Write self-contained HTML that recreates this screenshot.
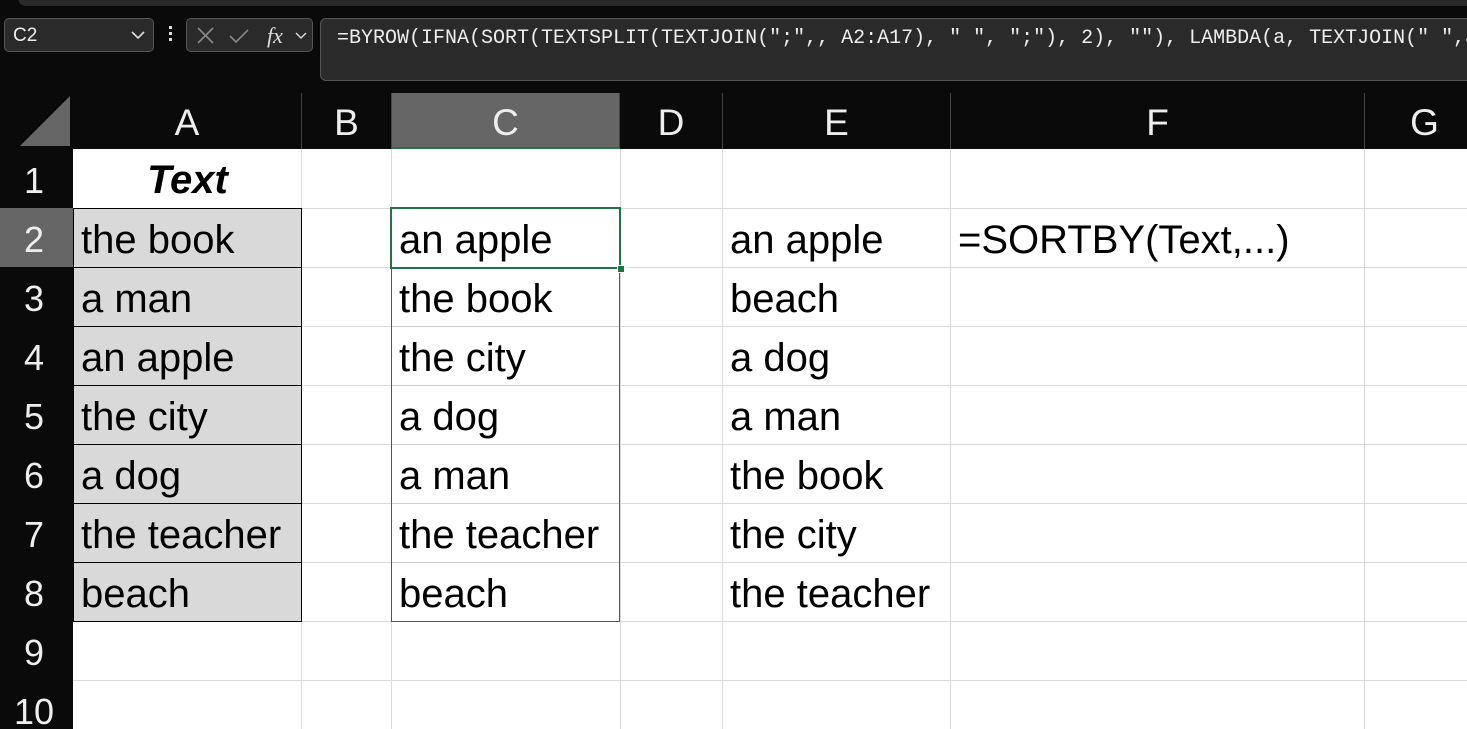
<!DOCTYPE html>
<html style="overflow:hidden"><head><style>
html,body{margin:0;width:1467px;height:729px;overflow:hidden}
body{background:#0a0a0a;position:relative;font-family:"Liberation Sans",sans-serif}
.a{position:absolute}
.top{left:18px;top:-10px;width:1460px;height:16px;background:#2b2b2b;border-radius:8px}
.nb{left:4px;top:18px;width:150px;height:34px;border:1px solid #555;border-radius:5px;background:#2a2a2a;color:#eee;font-size:19px;line-height:34px;box-sizing:border-box;padding-left:8px}
.fxb{left:186px;top:18px;width:127px;height:34px;border:1px solid #555;border-radius:5px;background:#2a2a2a;box-sizing:border-box}
.fb{left:320px;top:18px;width:1160px;height:63px;border:1px solid #555;border-radius:6px;background:#2a2a2a;box-sizing:border-box;color:#eee;font-family:"Liberation Mono",monospace;font-size:20px;padding:8px 0 0 16px;white-space:nowrap}
.ch{top:93px;height:56px;color:#eee;font-size:37px;text-align:center;line-height:60px;border-right:1px solid #444;box-sizing:border-box}
.rh{left:0;width:68px;height:59px;color:#eee;font-size:36px;text-align:center;line-height:64px;box-sizing:border-box}
.grid{left:73px;top:149px;width:1394px;height:580px;background:#fff}
.vl{top:149px;width:1px;height:580px;background:#dadada}
.hl{left:73px;width:1394px;height:1px;background:#dadada}
.c{position:absolute;font-size:40px;color:#000;line-height:59px;padding-left:8px;box-sizing:border-box;height:59px;white-space:nowrap}
</style></head><body>
<div class="a top"></div>
<div class="a nb">C2<svg class="a" style="left:126px;top:11px" width="14" height="10"><path d="M1 2l6 6 6-6" stroke="#ddd" stroke-width="1.6" fill="none"/></svg></div>
<div class="a" style="left:169px;top:26px;width:3px;height:3px;background:#ddd;box-shadow:0 6px #ddd,0 12px #ddd"></div>
<div class="a fxb"><svg width="127" height="34"><path d="M11 9l15 15M26 9L11 24" stroke="#888" stroke-width="1.6"/><path d="M43 17l6 6 12-12" stroke="#888" stroke-width="1.6" fill="none"/><text x="80" y="24" fill="#ddd" font-family="Liberation Serif" font-style="italic" font-size="22">fx</text><path d="M109 14l5 5 5-5" stroke="#ddd" stroke-width="1.4" fill="none"/></svg></div>
<div class="a fb">=BYROW(IFNA(SORT(TEXTSPLIT(TEXTJOIN(";",, A2:A17), " ", ";"), 2), ""), LAMBDA(a, TEXTJOIN(" ",a))</div>
<svg class="a" style="left:0;top:93px" width="73" height="56"><path d="M70 3V53H20Z" fill="#666"/></svg>
<div class="a ch" style="left:73px;width:229px">A</div>
<div class="a ch" style="left:302px;width:90px">B</div>
<div class="a ch" style="left:392px;width:228px;background:#666;border-bottom:2px solid #217346">C</div>
<div class="a ch" style="left:620px;width:103px">D</div>
<div class="a ch" style="left:723px;width:228px">E</div>
<div class="a ch" style="left:951px;width:414px">F</div>
<div class="a ch" style="left:1365px;width:120px">G</div>
<div class="a" style="left:0;top:208px;width:73px;height:59px;background:#666"></div>
<div class="a rh" style="top:149px">1</div>
<div class="a rh" style="top:208px">2</div>
<div class="a rh" style="top:267px">3</div>
<div class="a rh" style="top:326px">4</div>
<div class="a rh" style="top:385px">5</div>
<div class="a rh" style="top:444px">6</div>
<div class="a rh" style="top:503px">7</div>
<div class="a rh" style="top:562px">8</div>
<div class="a rh" style="top:621px">9</div>
<div class="a rh" style="top:680px">10</div>
<div class="a grid"></div>
<div class="a vl" style="left:301px"></div><div class="a vl" style="left:391px"></div><div class="a vl" style="left:620px"></div><div class="a vl" style="left:722px"></div><div class="a vl" style="left:950px"></div><div class="a vl" style="left:1364px"></div>
<div class="a hl" style="top:208px"></div><div class="a hl" style="top:267px"></div><div class="a hl" style="top:326px"></div><div class="a hl" style="top:385px"></div><div class="a hl" style="top:444px"></div><div class="a hl" style="top:503px"></div><div class="a hl" style="top:562px"></div><div class="a hl" style="top:621px"></div><div class="a hl" style="top:680px"></div>
<div class="a" style="left:73px;top:208px;width:229px;height:414px;background:#d9d9d9;border:1px solid #000;box-sizing:border-box;background-image:repeating-linear-gradient(to bottom,transparent 0 58px,#000 58px 59px)"></div>
<div class="a" style="left:391px;top:208px;width:229px;height:414px;background:#fff;border:1px solid #555;box-sizing:border-box;background-image:repeating-linear-gradient(to bottom,transparent 0 58px,#d0d0d0 58px 59px)"></div>
<div class="a" style="left:390px;top:207px;width:231px;height:62px;border:2px solid #217346;box-sizing:border-box"></div>
<div class="a" style="left:617px;top:265px;width:6px;height:6px;background:#217346;border:1px solid #fff"></div>
<div class="c" style="left:73px;top:151px;width:229px;text-align:center;font-weight:bold;font-style:italic;padding:0">Text</div>
<div class="c" style="left:73px;top:211px">the book</div>
<div class="c" style="left:73px;top:270px">a man</div>
<div class="c" style="left:73px;top:329px">an apple</div>
<div class="c" style="left:73px;top:388px">the city</div>
<div class="c" style="left:73px;top:447px">a dog</div>
<div class="c" style="left:73px;top:506px">the teacher</div>
<div class="c" style="left:73px;top:565px">beach</div>
<div class="c" style="left:391px;top:211px">an apple</div>
<div class="c" style="left:391px;top:270px">the book</div>
<div class="c" style="left:391px;top:329px">the city</div>
<div class="c" style="left:391px;top:388px">a dog</div>
<div class="c" style="left:391px;top:447px">a man</div>
<div class="c" style="left:391px;top:506px">the teacher</div>
<div class="c" style="left:391px;top:565px">beach</div>
<div class="c" style="left:722px;top:211px">an apple</div>
<div class="c" style="left:722px;top:270px">beach</div>
<div class="c" style="left:722px;top:329px">a dog</div>
<div class="c" style="left:722px;top:388px">a man</div>
<div class="c" style="left:722px;top:447px">the book</div>
<div class="c" style="left:722px;top:506px">the city</div>
<div class="c" style="left:722px;top:565px">the teacher</div>
<div class="c" style="left:950px;top:211px">=SORTBY(Text,...)</div>
</body></html>
